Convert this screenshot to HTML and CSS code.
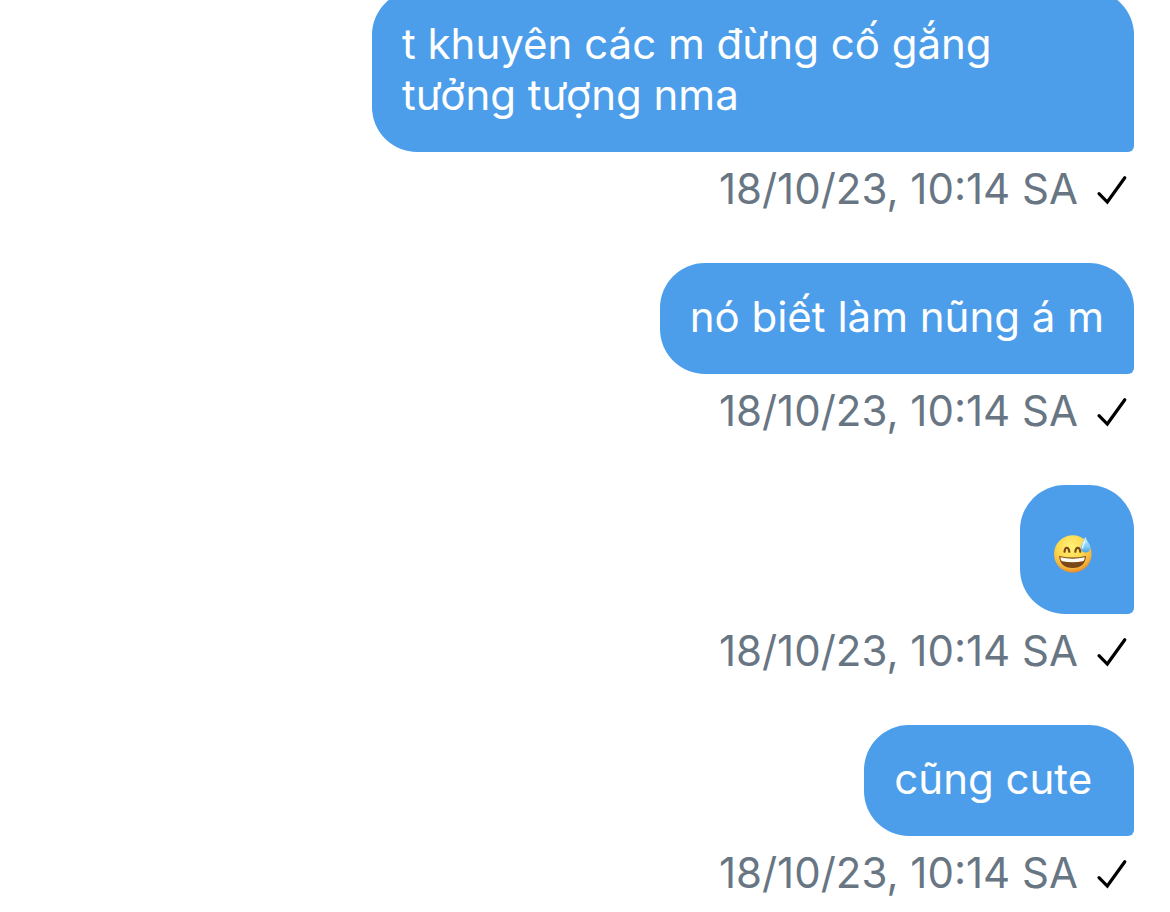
FILE: index.html
```html
<!DOCTYPE html>
<html lang="vi">
<head>
<meta charset="utf-8">
<meta name="viewport" content="width=device-width, initial-scale=1">
<title>Tin nhắn</title>
<link rel="stylesheet" href="styles.css">
</head>
<body>
<svg class="defs" aria-hidden="true">
  <symbol id="check" viewBox="0 0 32 32">
    <path d="M3 20.6 L11.3 29 L28.8 4.8" fill="none" stroke="currentColor" stroke-width="3.2" stroke-linecap="round" stroke-linejoin="miter"/>
  </symbol>
</svg>
<main class="thread">
  <article class="message">
    <p class="bubble">t khuyên các m đừng cố gắng tưởng tượng nma</p>
    <div class="meta"><time datetime="2023-10-18T10:14">18/10/23, 10:14 SA</time><svg class="check" role="img" aria-label="Đã gửi"><use href="#check"/></svg></div>
  </article>
  <article class="message">
    <p class="bubble">nó biết làm nũng á m</p>
    <div class="meta"><time datetime="2023-10-18T10:14">18/10/23, 10:14 SA</time><svg class="check" role="img" aria-label="Đã gửi"><use href="#check"/></svg></div>
  </article>
  <article class="message">
    <div class="bubble bubble-emoji">
      <svg class="emoji" viewBox="0 0 40 40" role="img" aria-label="Cười toát mồ hôi">
        <defs>
          <radialGradient id="face" cx="0.45" cy="0.3" r="0.72">
            <stop offset="0" stop-color="#fff27c"/>
            <stop offset="0.5" stop-color="#fcd94c"/>
            <stop offset="0.82" stop-color="#f5b23c"/>
            <stop offset="1" stop-color="#dd8229"/>
          </radialGradient>
          <linearGradient id="drop" x1="0" y1="0" x2="0" y2="1">
            <stop offset="0" stop-color="#d6f4ff"/>
            <stop offset="0.6" stop-color="#86cff6"/>
            <stop offset="1" stop-color="#4ba3e4"/>
          </linearGradient>
        </defs>
        <circle cx="19.8" cy="20" r="18.8" fill="url(#face)"/>
        <path d="M11.5 17.8 C12 12.4 15.6 12.4 16.3 17.8 M22.3 17.8 C23 12.4 26.6 12.4 27.3 17.8" fill="none" stroke="#794514" stroke-width="2.1" stroke-linecap="round"/>
        <path d="M6.2 22 Q19.6 25.2 33 22 Q32.2 34 19.6 34 Q7 34 6.2 22 Z" fill="#794719"/>
        <path d="M7.4 23.2 Q19.6 26.1 31.8 23.2 Q31.6 26.7 29.9 27.2 Q19.6 29.2 9.3 27.2 Q7.6 26.7 7.4 23.2 Z" fill="#fffdf3"/>
        <path d="M32.3 2.8 C30.4 7.4 27.8 10.5 27.8 13.7 C27.8 20.1 37.4 20.1 37.4 13.7 C37.4 10.5 34 7.4 32.3 2.8 Z" fill="url(#drop)"/>
        <path d="M31.7 7.6 C30.6 10.4 29.4 12 29.6 14" fill="none" stroke="#f0fcff" stroke-width="1.3" stroke-linecap="round"/>
      </svg>
    </div>
    <div class="meta"><time datetime="2023-10-18T10:14">18/10/23, 10:14 SA</time><svg class="check" role="img" aria-label="Đã gửi"><use href="#check"/></svg></div>
  </article>
  <article class="message">
    <p class="bubble">cũng cute&nbsp;</p>
    <div class="meta"><time datetime="2023-10-18T10:14">18/10/23, 10:14 SA</time><svg class="check" role="img" aria-label="Đã gửi"><use href="#check"/></svg></div>
  </article>
</main>
</body>
</html>
```
FILE: styles.css
```css
* {
  box-sizing: border-box;
}

html {
  overflow: hidden;
}

body {
  margin: 0;
  background: #fff;
  font-family: Inter, "Noto Sans", sans-serif;
  font-size: 42px;
  line-height: 51px;
}

.defs {
  display: none;
}

/* The oldest message is scrolled partly above the top edge. */
.thread {
  display: flex;
  flex-direction: column;
  gap: 49px;
  margin-top: -10px;
  padding: 0 36px;
}

.message {
  display: flex;
  flex-direction: column;
  align-items: flex-end;
  gap: 11px;
}

.bubble {
  max-width: 762px;
  min-width: 114px;
  margin: 0;
  padding: 28px 30px 32px;
  border-radius: 45px 45px 6px 45px;
  background: #4c9eeb;
  color: #fff;
}

.bubble-emoji {
  padding: 49px 40px 40px 32px;
}

.emoji {
  display: block;
  width: 42px;
  height: 40px;
}

.meta {
  display: flex;
  align-items: center;
  gap: 18px;
  padding-right: 6px;
  color: #687684;
}

.check {
  width: 32px;
  height: 32px;
  color: #000;
}
```
